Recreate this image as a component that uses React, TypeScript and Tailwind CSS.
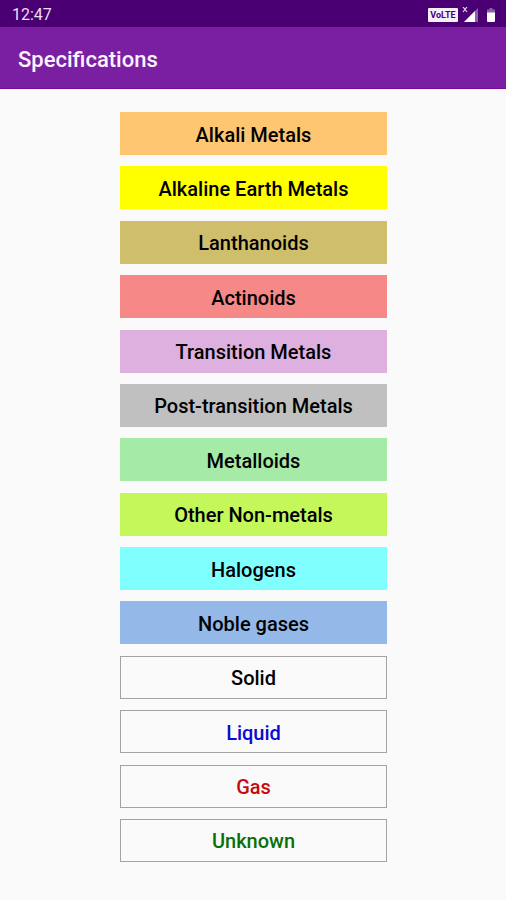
interface Specification {
  label: string;
  className: string;
}

const specifications: Specification[] = [
  { label: "Alkali Metals", className: "bg-[#fec670] text-black" },
  { label: "Alkaline Earth Metals", className: "bg-[#ffff00] text-black" },
  { label: "Lanthanoids", className: "bg-[#cfbe6c] text-black" },
  { label: "Actinoids", className: "bg-[#f68888] text-black" },
  { label: "Transition Metals", className: "bg-[#ddb0df] text-black" },
  { label: "Post-transition Metals", className: "bg-[#c0c0c0] text-black" },
  { label: "Metalloids", className: "bg-[#a5eba7] text-black" },
  { label: "Other Non-metals", className: "bg-[#c4f75a] text-black" },
  { label: "Halogens", className: "bg-[#80ffff] text-black" },
  { label: "Noble gases", className: "bg-[#94b8e8] text-black" },
  { label: "Solid", className: "border border-[#a3a3a3] text-black" },
  { label: "Liquid", className: "border border-[#a3a3a3] text-[#0a0ad0]" },
  { label: "Gas", className: "border border-[#a3a3a3] text-[#c80a0a]" },
  { label: "Unknown", className: "border border-[#a3a3a3] text-[#087008]" },
];

function SignalIcon() {
  return (
    <svg width="17" height="16" viewBox="0 0 17 16" aria-label="Mobile signal">
      <path d="M16 1v14H2z" fill="#8d5fa8" />
      <path d="M13 4v11H2z" fill="#fff" />
      <path d="M1 0l4 5M5 0L1 5" stroke="#e6d6ee" strokeWidth="1.2" />
    </svg>
  );
}

function BatteryIcon() {
  return (
    <svg width="8" height="14" viewBox="0 0 8 14" aria-label="Battery">
      <path d="M2.5 0h3v1.5H8V5H0V1.5h2.5z" fill="#8d5fa8" />
      <path d="M0 4.5h8V13a1 1 0 0 1-1 1H1a1 1 0 0 1-1-1z" fill="#fff" />
    </svg>
  );
}

function StatusBar() {
  return (
    <div className="flex h-[27px] items-center justify-between bg-[#4a0072] pt-0.5 pr-[11px] pl-3">
      <span className="text-base leading-5 text-[#eadff0]">12:47</span>
      <div className="flex items-center gap-1">
        <span className="flex h-[14px] w-[30px] items-center justify-center rounded-[1px] bg-[#f6effa] text-[9px] leading-3 font-bold text-[#4a0072]">
          VoLTE
        </span>
        <SignalIcon />
        <div className="pl-1">
          <BatteryIcon />
        </div>
      </div>
    </div>
  );
}

export default function App() {
  return (
    <div className="flex min-h-screen flex-col bg-[#fafafa] font-[Roboto,sans-serif]">
      <StatusBar />

      <header className="flex h-[62px] items-center border-b border-[#7a0a9c] bg-[#7b1fa2] px-[18px] pt-1">
        <h1 className="text-[22px] leading-7 font-medium text-[#fbf4ff]">Specifications</h1>
      </header>

      <main className="flex flex-1 flex-col pt-[23px] pr-[119px] pb-[38px] pl-[120px]">
        <ul className="flex flex-1 flex-col justify-between">
          {specifications.map((spec) => (
            <li
              key={spec.label}
              className={`flex h-[43px] items-center justify-center pt-0.5 text-[20px] leading-6 font-medium whitespace-nowrap ${spec.className}`}
            >
              {spec.label}
            </li>
          ))}
        </ul>
      </main>
    </div>
  );
}
